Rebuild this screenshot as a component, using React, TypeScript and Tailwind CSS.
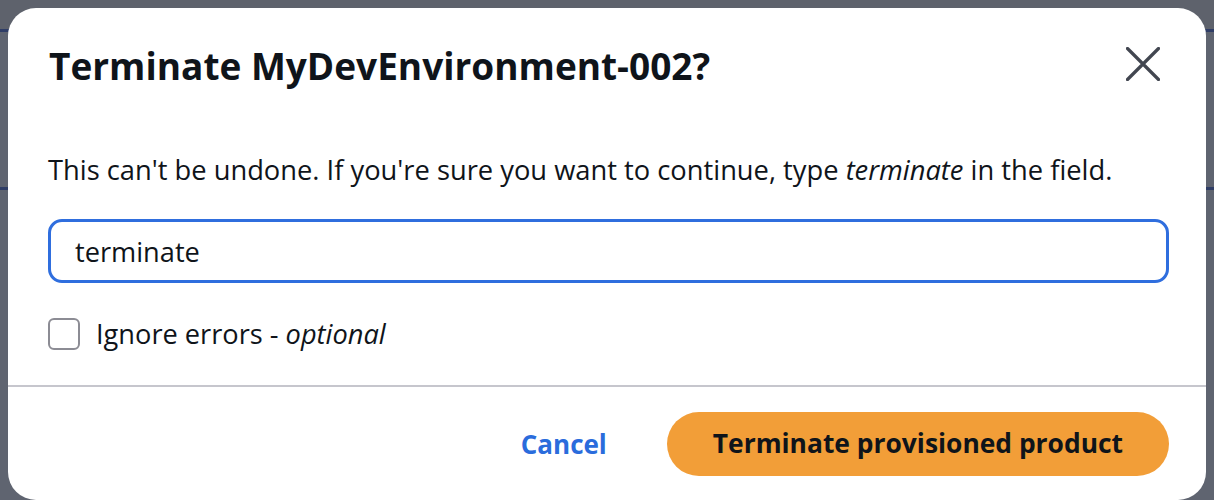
export default function App() {
  return (
    <div
      className="relative w-[1214px] h-[500px] overflow-hidden bg-[#5f6470]"
      style={{ fontFamily: '"Open Sans", "Noto Sans", sans-serif' }}
    >
      {/* Dimmed page behind the modal */}
      <div className="flex flex-col">
        <div className="h-[29px] bg-[#5e626c]" />
        <div className="h-[3px] bg-[#2f3d66]" />
        <div className="h-[155px]" />
        <div className="h-[3px] bg-[#2f3d66]" />
      </div>

      {/* Modal */}
      <div className="absolute left-[8px] top-[8px] w-[1198px] h-[492px] bg-white rounded-[28px] flex flex-col">
        {/* Header */}
        <div className="flex items-start justify-between pl-[41px] pr-[46px] pt-[36px]">
          <h1 className="text-[37px] leading-[44px] font-bold text-[#0f141a]">
            Terminate MyDevEnvironment-002?
          </h1>
          <button className="mt-[3px] w-[34px] h-[34px] flex items-center justify-center">
            <svg width="34" height="34" viewBox="0 0 34 34" fill="none" stroke="#424650" strokeWidth="3.2" strokeLinecap="round">
              <path d="M1.5 1.5 L32.5 32.5 M32.5 1.5 L1.5 32.5" />
            </svg>
          </button>
        </div>

        {/* Body */}
        <div className="pl-[40px] pr-[37px]">
          <p className="mt-[64px] text-[27.3px] leading-[36px] text-[#0f141a]">
            This can't be undone. If you're sure you want to continue, type <em>terminate</em> in the field.
          </p>
          <input
            readOnly
            value="terminate"
            className="mt-[31px] w-full h-[64px] rounded-[14px] border-[3px] border-[#2f6ede] px-[24px] text-[27.2px] text-[#0f141a] outline-none"
          />
          <label className="mt-[33px] h-[36px] flex items-center gap-[16px]">
            <span className="w-[32px] h-[32px] rounded-[6px] border-2 border-[#8c8c94] bg-white" />
            <span className="text-[27.2px] text-[#0f141a]">
              Ignore errors - <em>optional</em>
            </span>
          </label>
        </div>

        <div className="mt-[33px] h-[2px] bg-[#c6c6cd]" />

        {/* Footer */}
        <div className="mt-[25px] pr-[37px] flex items-center justify-end gap-[60px]">
          <button className="text-[26px] font-bold text-[#2a6cdc]">Cancel</button>
          <button className="h-[64px] px-[46px] rounded-full bg-[#f29e38] text-[26.4px] font-bold text-[#0f141a]">
            Terminate provisioned product
          </button>
        </div>
      </div>
    </div>
  );
}
